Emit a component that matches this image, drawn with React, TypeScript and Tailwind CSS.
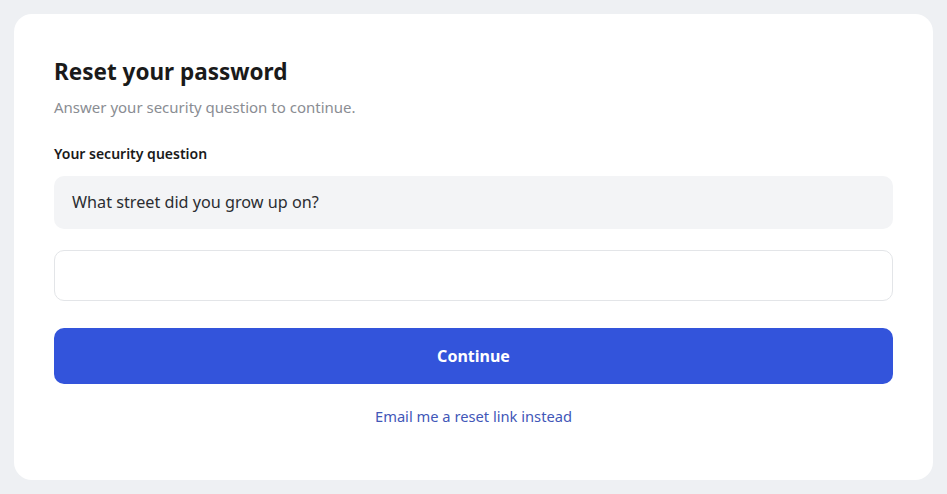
import React, { useState } from 'react';

export default function App() {
  const [answer, setAnswer] = useState('');

  return (
    <div className="min-h-screen bg-[#eef0f3] p-[14px]" style={{ fontFamily: '"Noto Sans", "Open Sans", sans-serif' }}>
      <div className="bg-white rounded-[18px] h-[466px] px-10 pt-[44px]">
        <h1 className="text-[22.5px] leading-[28px] font-bold text-[#1a1a1a]">Reset your password</h1>
        <p className="mt-[10px] text-[15px] leading-[22px] text-[#8a8d93]">Answer your security question to continue.</p>

        <div className="mt-[26px] text-[14px] leading-[20px] font-semibold text-[#1a1a1a]">Your security question</div>
        <div className="mt-[12px] h-[53px] rounded-[10px] bg-[#f3f4f6] px-[18px] flex items-center text-[16.2px] text-[#2b2d31]">
          What street did you grow up on?
        </div>

        <input
          value={answer}
          onChange={(e) => setAnswer(e.target.value)}
          className="mt-[21px] block w-full h-[51px] rounded-[10px] border border-[#e3e5e8] px-[18px] text-[16px] outline-none"
        />

        <button className="mt-[27px] w-full h-[56px] rounded-[10px] bg-[#3354db] text-white text-[16px] font-bold">
          Continue
        </button>

        <div className="mt-[20px] text-center">
          <a href="#" className="text-[14.7px] leading-[22px] text-[#4257b8]">Email me a reset link instead</a>
        </div>
      </div>
    </div>
  );
}
